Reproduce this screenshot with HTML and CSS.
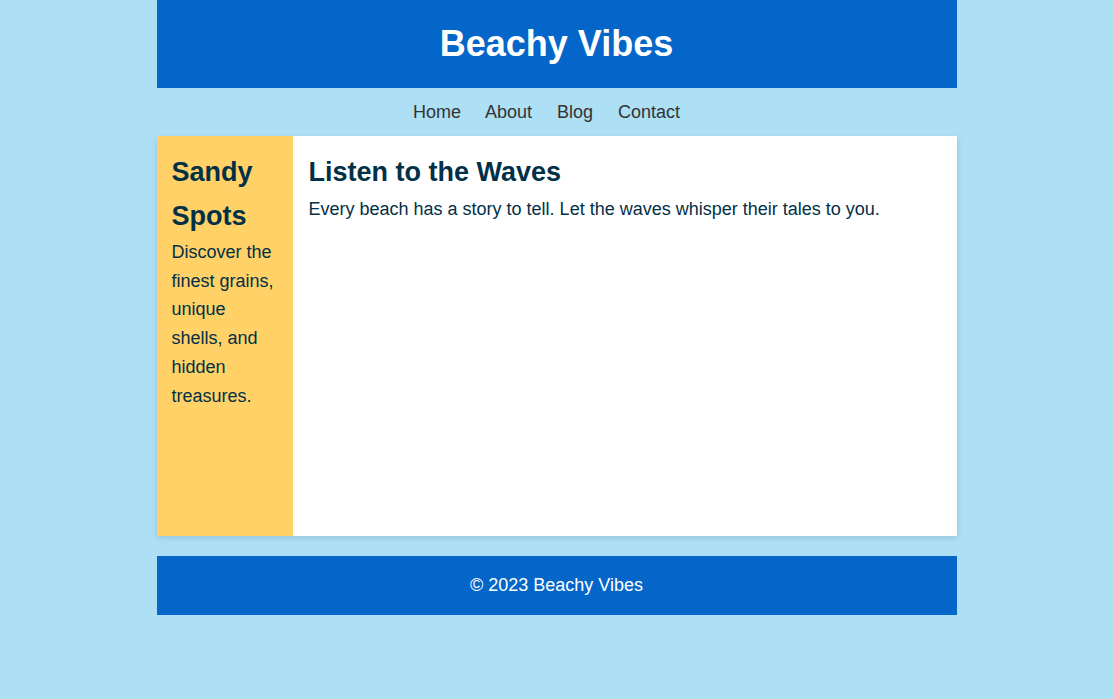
FILE: index.html
```html
<!DOCTYPE html>
<html lang="en">
<head>
<meta charset="utf-8">
<title>Beachy Vibes</title>
<link rel="stylesheet" href="styles.css">
</head>
<body>
<div class="page">
  <header class="site-header">
    <h1>Beachy Vibes</h1>
  </header>
  <nav class="site-nav">
    <a href="#">Home</a>
    <a href="#">About</a>
    <a href="#">Blog</a>
    <a href="#">Contact</a>
  </nav>
  <main class="layout">
    <aside class="sidebar">
      <h2>Sandy Spots</h2>
      <p>Discover the finest grains, unique shells, and hidden treasures.</p>
    </aside>
    <section class="content">
      <h2>Listen to the Waves</h2>
      <p>Every beach has a story to tell. Let the waves whisper their tales to you.</p>
    </section>
  </main>
  <footer class="site-footer">© 2023 Beachy Vibes</footer>
</div>
</body>
</html>
```
FILE: styles.css
```css
html, body {
  margin: 0;
  padding: 0;
}
body {
  background: #addff5;
  font-family: "Liberation Sans", Arial, sans-serif;
  font-size: 18px;
  line-height: 1.6;
  color: #023047;
}
.page {
  width: 800px;
  margin: 0 auto;
}
.site-header {
  background: #0466c8;
  color: #ffffff;
  text-align: center;
  padding: 15px;
}
.site-header h1 {
  margin: 0;
  font-size: 36px;
  font-weight: bold;
}
.site-nav {
  text-align: center;
  padding: 10px 0;
}
.site-nav a {
  color: #333333;
  text-decoration: none;
  margin-right: 20px;
}
.layout {
  display: flex;
  min-height: 400px;
  background: #ffffff;
  box-shadow: 0 2px 6px rgba(0, 0, 0, 0.12);
}
.sidebar {
  width: 17%;
  box-sizing: border-box;
  background: #ffd166;
  padding: 15px;
}
.content {
  flex: 1;
  padding: 15px 15px 15px 16px;
}
h2 {
  margin: 0;
  font-size: 27px;
  font-weight: bold;
}
.sidebar p, .content p {
  margin: 0;
}
.site-footer {
  margin-top: 20px;
  background: #0466c8;
  color: #ffffff;
  text-align: center;
  padding: 15px;
}
```
